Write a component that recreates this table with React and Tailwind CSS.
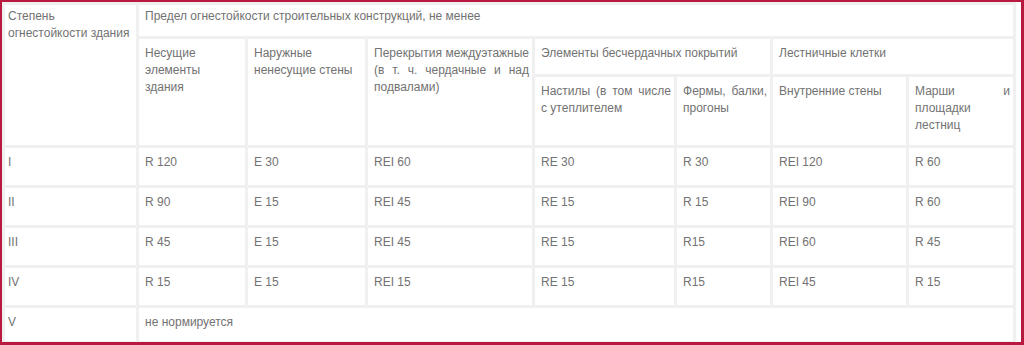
import React from 'react';

const cell = 'bg-white align-top text-justify pl-[6px] pr-[3px]';

const rows = [
  ['I', 'R 120', 'E 30', 'REI 60', 'RE 30', 'R 30', 'REI 120', 'R 60'],
  ['II', 'R 90', 'E 15', 'REI 45', 'RE 15', 'R 15', 'REI 90', 'R 60'],
  ['III', 'R 45', 'E 15', 'REI 45', 'RE 15', 'R15', 'REI 60', 'R 45'],
  ['IV', 'R 15', 'E 15', 'REI 15', 'RE 15', 'R15', 'REI 45', 'R 15'],
];

export default function App() {
  return (
    <div className="w-[1024px] h-[345px] bg-white border-[#b8193f] border-t-2 border-l-2 border-r-[3px] border-b-[3px] overflow-hidden">
      <table
        className="table-fixed border-separate border-spacing-[3px] bg-[#f0f0f0] w-[1014px] text-[12px] leading-[17px] text-[#727272]"
        style={{ fontFamily: '"Liberation Sans", Arial, sans-serif' }}
      >
        <colgroup>
          <col className="w-[9px]" />
          <col className="w-[119px]" />
          <col className="w-[106px]" />
          <col className="w-[117px]" />
          <col className="w-[164px]" />
          <col className="w-[139px]" />
          <col className="w-[93px]" />
          <col className="w-[133px]" />
          <col className="w-[104px]" />
        </colgroup>
        <tbody>
          <tr className="h-[31px]">
            <td colSpan={2} rowSpan={3} className="bg-white align-top pl-[3px] pr-[3px] pt-[3px]">
              Степень огнестойкости здания
            </td>
            <td colSpan={7} className={`${cell} pt-[3px]`}>
              Предел огнестойкости строительных конструкций, не менее
            </td>
          </tr>
          <tr className="h-[35px]">
            <td rowSpan={2} className={`${cell} pt-[6px]`}>Несущие элементы здания</td>
            <td rowSpan={2} className={`${cell} pt-[6px]`}>Наружные ненесущие стены</td>
            <td rowSpan={2} className={`${cell} pt-[6px]`}>
              Перекрытия междуэтажные (в т. ч. чердачные и над подвалами)
            </td>
            <td colSpan={2} className={`${cell} pt-[6px]`}>Элементы бесчердачных покрытий</td>
            <td colSpan={2} className={`${cell} pt-[6px]`}>Лестничные клетки</td>
          </tr>
          <tr className="h-[68px]">
            <td className={`${cell} pt-[6px]`}>Настилы (в том числе с утеплителем</td>
            <td className={`${cell} pt-[6px]`}>Фермы, балки, прогоны</td>
            <td className={`${cell} pt-[6px]`}>Внутренние стены</td>
            <td className={`${cell} pt-[6px]`}>Марши и площадки лестниц</td>
          </tr>
          {rows.map((r) => (
            <tr key={r[0]} className="h-[37px]">
              <td colSpan={2} className="bg-white align-top pl-[3px] pt-[6px]">{r[0]}</td>
              {r.slice(1).map((v, i) => (
                <td key={i} className={`${cell} pt-[6px]`}>{v}</td>
              ))}
            </tr>
          ))}
          <tr className="h-[33px]">
            <td colSpan={2} className="bg-white align-top pl-[3px] pt-[6px]">V</td>
            <td colSpan={7} className={`${cell} pt-[6px]`}>не нормируется</td>
          </tr>
        </tbody>
      </table>
    </div>
  );
}
